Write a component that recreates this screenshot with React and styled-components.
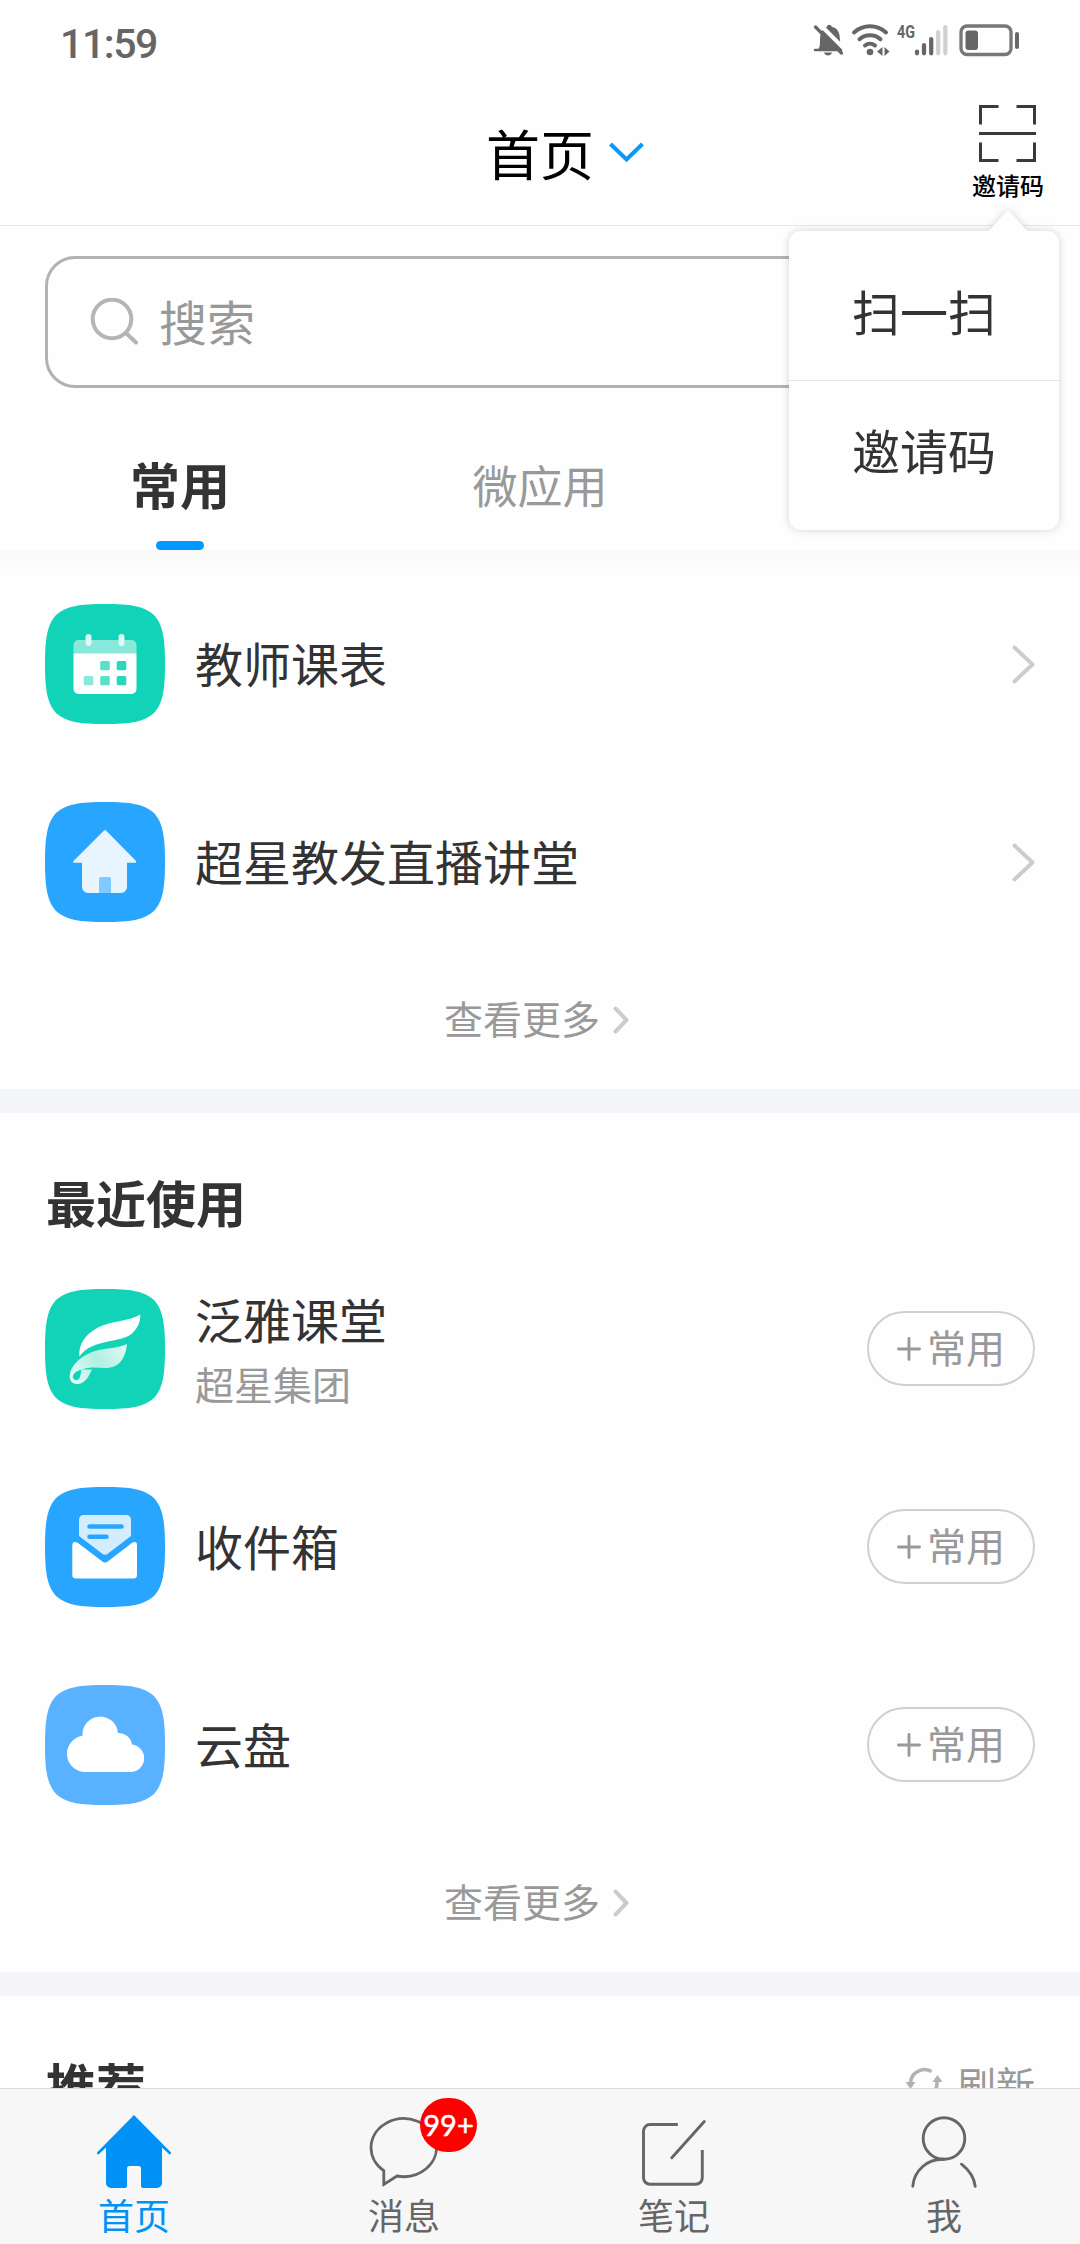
import React from 'react'
import styled, { createGlobalStyle } from 'styled-components'

const GlobalStyle = createGlobalStyle`
  * {
    box-sizing: border-box;
  }

  body {
    margin: 0;
    background: #fefefe;
    font-family: 'Noto Sans CJK SC', sans-serif;
  }

  svg {
    display: block;
    flex: none;
  }
`
const Page = styled.div`
  display: flex;
  flex-direction: column;
  width: 1080px;
  height: 2244px;
  overflow: hidden;
  color: #333;
  background: #fefefe;
`
const StatusBar = styled.div`
  flex: none;
  height: 80px;
  padding: 0 60px;
  display: flex;
  justify-content: space-between;
  align-items: center;
`
const Time = styled.div`
  font-family: Roboto, sans-serif;
  font-size: 41px;
  font-weight: 500;
  line-height: 48px;
  letter-spacing: -1.4px;
  padding-top: 7px;
  color: #666;
`
const Header = styled.header`
  flex: none;
  position: relative;
  z-index: 1;
  height: 146px;
  display: grid;
  grid-template-columns: 1fr auto 1fr;
  align-items: center;
  border-bottom: 1px solid #e8e8e8;
`
const Title = styled.h1`
  grid-column: 2;
  margin: 0;
  font-size: 54px;
  font-weight: 400;
  line-height: 80px;
  color: #000;
`
const HeaderRight = styled.div`
  display: flex;
  justify-content: space-between;
  align-items: center;
  padding: 0 36px 0 15px;
`
const ScanButton = styled.div`
  display: flex;
  flex-direction: column;
  align-items: center;
  gap: 6px;
  padding-top: 1px;
  font-size: 24px;
  font-weight: 500;
  line-height: 34px;
  color: #000;

  svg {
    margin-right: 1px;
  }
`
const Menu = styled.div`
  position: absolute;
  top: 151px;
  left: 789px;
  width: 270px;
  height: 299px;
  padding-top: 10px;
  border-radius: 12px;
  background: #fefefe;
  filter: drop-shadow(0 0 4px rgba(0, 0, 0, 0.17));
`
const MenuArrow = styled.svg`
  position: absolute;
  top: -21px;
  left: 197px;
`
const MenuItem = styled.div`
  height: 140px;
  font-size: 48px;
  line-height: ${props => (props.$last ? 137 : 139)}px;
  text-align: center;
  border-bottom: ${props => (props.$last ? 'none' : '1px solid #e6e6e6')};
`
const Content = styled.main`
  flex: 1;
  min-height: 0;
  overflow: hidden;
`
const SearchBox = styled.div`
  height: 132px;
  margin: 30px 45px 0;
  padding: 0 0 0 42px;
  display: flex;
  align-items: center;
  gap: 21px;
  border: 3px solid #b2b2b2;
  border-radius: 30px;
  font-size: 48px;
  line-height: 72px;
  color: #999;
`
const SearchHint = styled.span`
  margin-top: -4px;
`
const Tabs = styled.nav`
  display: grid;
  grid-template-columns: repeat(3, 1fr);
  height: 162px;
`
const Tab = styled.div`
  display: flex;
  flex-direction: column;
  justify-content: space-between;
  align-items: center;
  padding-top: ${props => (props.$active ? 57 : 59)}px;
  font-size: ${props => (props.$active ? 50 : 45)}px;
  font-weight: ${props => (props.$active ? 700 : 400)};
  line-height: 76px;
  color: ${props => (props.$active ? '#333' : '#999')};

  &:after {
    content: '';
    width: 48px;
    height: 9px;
    border-radius: 5px;
    background: ${props => (props.$active ? '#0099ff' : 'transparent')};
  }
`
const TabShade = styled.div`
  height: 24px;
  margin-bottom: -9px;
  background: linear-gradient(#f9f9fa, #fefefe);
`
const Row = styled.div`
  display: flex;
  align-items: center;
  height: 198px;
  padding: 0 45px;
`
const RowText = styled.div`
  flex: 1;
  margin-left: 30px;
  padding-bottom: 4px;
`
const RowTitle = styled.div`
  font-size: 48px;
  line-height: 72px;
`
const RowNote = styled.div`
  font-size: 39px;
  line-height: 58px;
  color: #999;
`
const AddButton = styled.div`
  display: flex;
  align-items: center;
  justify-content: center;
  gap: 6px;
  width: 168px;
  height: 75px;
  margin-top: -1px;
  border: 2px solid #d0d0d0;
  border-radius: 38px;
  font-size: 39px;
  line-height: 71px;
  color: #999;
`
const AddLabel = styled.span`
  margin-top: -4px;
`
const More = styled.div`
  display: flex;
  justify-content: center;
  align-items: center;
  gap: 13px;
  height: 128px;
  padding: 0 7px 11px 0;
  font-size: 39px;
  line-height: 58px;
  color: #999;
`
const MoreLabel = styled.span`
  margin-top: -5px;
`
const Divider = styled.div`
  height: 24px;
  background: #f4f5f8;
`
const SectionHead = styled.div`
  display: flex;
  justify-content: space-between;
  align-items: center;
  height: 137px;
  padding: 38px 45px 0 46px;
`
const SectionTitle = styled.h2`
  margin: 0;
  font-size: 50px;
  font-weight: 700;
  line-height: 76px;
`
const Refresh = styled.div`
  display: flex;
  align-items: center;
  gap: 15px;
  margin-top: -2px;
  font-size: 39px;
  line-height: 58px;
  color: #999;
`
const BottomBar = styled.footer`
  flex: none;
  display: grid;
  grid-template-columns: repeat(4, 1fr);
  height: 156px;
  border-top: 1px solid #dcdcdc;
  background: #f7f7f7;
`
const NavItem = styled.div`
  position: relative;
  display: flex;
  flex-direction: column;
  align-items: center;
  padding: 26px 2px 0 0;
  font-size: 36px;
  line-height: 52px;
  color: ${props => (props.$active ? '#0092f6' : '#666')};
`
const Badge = styled.span`
  position: absolute;
  top: 9px;
  left: 150px;
  width: 57px;
  height: 54px;
  border-radius: 27px;
  background: #ff0000;
  color: #fff;
  font-family: Lato, sans-serif;
  font-size: 29px;
  line-height: 54px;
  text-align: center;
  -webkit-text-stroke: 0.5px #fff;
`

const StatusIcons = () => (
  <svg width="208" height="36" viewBox="812 22 208 36" fill="none">
    {/* muted bell */}
    <path
      d="M818 50c2-3 2-6 2-10 0-8 3-12 7-13 0-3 4-3 5 0 6 1 8 6 8 14 0 4 1 6 3 9z"
      fill="#666"
    />
    <path d="M824 52.5h8c-1 4-7 4-8 0z" fill="#666" />
    <path d="M815 50h26" stroke="#666" strokeWidth="2.5" strokeLinecap="round" />
    <path d="M818 22.500L847 51.500" stroke="#fefefe" strokeWidth="4" />
    <path d="M815.500 27L841.500 53" stroke="#666" strokeWidth="3.200" strokeLinecap="round" />
    {/* wifi */}
    <g stroke="#666" strokeWidth="4" strokeLinecap="round">
      <path d="M854 32.500C863 24.300 877 24.300 886 32.500" />
      <path d="M859.500 39.300C865.500 34 874.500 34 880.500 39.300" />
      <path d="M865 45.500C868 43 872 43 875 45.500" />
    </g>
    <circle cx="870" cy="52" r="3.300" fill="#666" />
    <path d="M877 51.500l5.500-4.500v9zM889.500 51.500l-5-4.500v9z" fill="#666" />
    <text
      x="897"
      y="38.300"
      fill="#666"
      fontFamily="Roboto, sans-serif"
      fontSize="18.500"
      fontWeight="700"
      textLength="18"
      lengthAdjust="spacingAndGlyphs"
    >
      4G
    </text>
    {/* signal */}
    <g strokeWidth="4.200" strokeLinecap="round">
      <path d="M917 51.500v1.800M924 45v8.300M931.200 39v14.300" stroke="#666" />
      <path d="M938.200 32v21.300M945.300 27v26.300" stroke="#d0d0d0" />
    </g>
    {/* battery */}
    <rect x="961" y="26" width="50" height="28.500" rx="6" stroke="#777" strokeWidth="3.300" />
    <rect x="965.500" y="30.500" width="12.500" height="19.500" rx="3" fill="#666" />
    <path d="M1017 34v13" stroke="#666" strokeWidth="4" strokeLinecap="round" />
  </svg>
)

const ScanIcon = () => (
  <svg width="57" height="57" viewBox="0 0 57 57" fill="none" stroke="#3a3a3a" strokeWidth="3">
    <path d="M1.500 19.500V1.500h18M37.500 1.500h18v18M55.500 37.500v18h-18M19.500 55.500h-18v-18M0 28.500h57" />
  </svg>
)

const SearchIcon = () => (
  <svg width="48" height="48" viewBox="0 0 48 48" fill="none" stroke="#b5b5b5" strokeWidth="4">
    <circle cx="22" cy="21" r="19.300" />
    <path d="M36 35L46 44.500" strokeLinecap="round" />
  </svg>
)

const Arrow = ({ width, height }) => (
  <svg width={width} height={height} fill="none" stroke="#ccc" strokeWidth="4" strokeLinecap="round" strokeLinejoin="round">
    <path d={`M2.500 2.500L${width - 2.5} ${height / 2}L2.500 ${height - 2.5}`} />
  </svg>
)

const AppIcon = ({ color, children }) => (
  <svg width="120" height="120" viewBox="0 0 120 120" fill="none">
    <path
      d="M60 0C85 0 99 2 109 11C118 21 120 35 120 60C120 85 118 99 109 109C99 118 85 120 60 120C35 120 21 118 11 109C2 99 0 85 0 60C0 35 2 21 11 11C21 2 35 0 60 0Z"
      fill={color}
    />
    {children}
  </svg>
)

const CalendarIcon = () => (
  <AppIcon color="#11d3b7">
    <path d="M28.500 50V41a5 5 0 0 1 5-5h53a5 5 0 0 1 5 5v9z" fill="#88e9db" />
    <path d="M28.500 49.500h63V85a5 5 0 0 1-5 5h-53a5 5 0 0 1-5-5z" fill="#fff" />
    <path d="M43.500 33v6M76.500 33v6" stroke="#dff8f4" strokeWidth="6" strokeLinecap="round" />
    <rect x="38.700" y="72" width="9.600" height="9.200" rx="1.500" fill="#88e9db" />
    <rect x="55.200" y="57" width="9.600" height="9.200" rx="1.500" fill="#58e0ca" />
    <rect x="55.200" y="72" width="9.600" height="9.200" rx="1.500" fill="#58e0ca" />
    <rect x="71.700" y="57" width="9.600" height="9.200" rx="1.500" fill="#29d7be" />
    <rect x="71.700" y="72" width="9.600" height="9.200" rx="1.500" fill="#29d7be" />
  </AppIcon>
)

const HouseIcon = () => (
  <AppIcon color="#28a5ff">
    <path
      d="M59 28.500q1-1 2 0L91 59q.8 1.800-1.500 1.800H82V85a6 6 0 0 1-6 6H43a6 6 0 0 1-6-6V60.800h-7.500Q27.500 60.800 28.500 59z"
      fill="#e8f5ff"
    />
    <path d="M54 91V77q0-2 2-2h8q2 0 2 2v14z" fill="#80caff" />
  </AppIcon>
)

const FeatherIcon = () => (
  <AppIcon color="#11d3b7">
    <defs>
      <linearGradient id="leaf" x1="26" y1="88" x2="80" y2="60" gradientUnits="userSpaceOnUse">
        <stop offset="0" stopColor="#e4faf6" />
        <stop offset="0.5" stopColor="#b0efe4" />
        <stop offset="1" stopColor="#dcf8f3" />
      </linearGradient>
    </defs>
    <path d="M95.300 25.500C82 33 67 31.500 53 38.500C40 45.500 33.500 55 34.300 67.500C41 58.500 50 55.500 61 53C73 50.500 83 49 88 43.500C93.500 38 95.500 32 95.300 25.500Z" fill="#fff" />
    <path
      fillRule="evenodd"
      d="M82 55C70 60.500 60 58 47 63C34 68.500 27 76 25 84.500C23.500 91 27 95.500 33 95C41 94 43.500 87.500 47 80.500L37 80.500C50 76 58 81.500 69 77.500C77.500 74 81 65 82 55ZM36.500 80.800C35.500 84 36 88 33.500 90.500C30.500 92.500 27 90 28 86.500C29 83.500 33 81.500 36.500 80.800Z"
      fill="url(#leaf)"
    />
  </AppIcon>
)

const MailIcon = () => (
  <AppIcon color="#28a5ff">
    <path d="M34 49V32.500a4.500 4.500 0 0 1 4.500-4.500h43a4.500 4.500 0 0 1 4.500 4.500V49L63 66.500Q60 69 57 66.500z" fill="#d3edff" />
    <path d="M44.500 39.500h32M44.500 49.800h17" stroke="#28a5ff" strokeWidth="4.600" strokeLinecap="round" />
    <path d="M27.300 58q.5-4.500 5-2.500L57 74.200q3 2.400 6 0L87.500 55.500q4.500-2 4.500 2.500V88a3.500 3.500 0 0 1-3.500 3.500H30.800a3.500 3.500 0 0 1-3.500-3.500z" fill="#fff" />
  </AppIcon>
)

const CloudIcon = () => (
  <AppIcon color="#59b2ff">
    <path
      d="M40.500 87A18.200 18.200 0 0 1 37.500 50.800A17.800 17.800 0 0 1 73 48A13.500 13.500 0 0 1 87 59.500A13.800 13.800 0 0 1 85.500 87Z"
      fill="#fff"
    />
  </AppIcon>
)

const HomeNavIcon = () => (
  <svg width="76" height="73" viewBox="0 0 76 73">
    <path
      d="M38 0L75 37.500Q75.500 39.500 73.500 39.500L66 32.500V68a5 5 0 0 1-5 5H47q-2 0-2-2V53.500q0-2.500-2.500-2.500h-9q-2.500 0-2.500 2.500V71q0 2-2 2H15a5 5 0 0 1-5-5V32.500L2.500 39.500Q.5 39.500 1 37.500Z"
      fill="#0092f6"
    />
  </svg>
)

const MessageNavIcon = () => (
  <svg width="70" height="73" viewBox="0 -2 70 73" fill="none" stroke="#666" strokeWidth="2.800">
    <path d="M14.800 53.600A32.700 29 0 1 1 28 59L14.800 67.500Z" />
  </svg>
)

const NoteNavIcon = () => (
  <svg width="70" height="73" viewBox="0 -2 70 73" fill="none" stroke="#666" strokeWidth="2.900">
    <path d="M38.800 7.500H11a6.500 6.500 0 0 0-6.500 6.500v46.800a6.500 6.500 0 0 0 6.500 6.500H56.800a6.500 6.500 0 0 0 6.500-6.500V33" />
    <path d="M32.800 40.800L65.300 4.500" strokeLinecap="round" />
  </svg>
)

const MeNavIcon = () => (
  <svg width="70" height="73" viewBox="0 0 70 73" fill="none" stroke="#666" strokeWidth="2.900">
    <circle cx="35" cy="23.500" r="20.800" />
    <path d="M3.800 71.200C5 56 18 43.500 35 44.300M52.500 49.200Q64.500 58.500 66.200 71.200" strokeLinecap="round" />
  </svg>
)

const RefreshIcon = () => (
  <svg width="38" height="36" viewBox="0 0 38 36" fill="none" stroke="#b2b2b2" strokeWidth="3.500">
    <path d="M27.500 6.500A14 14 0 0 0 6.500 18.500M11.500 29.500A14 14 0 0 0 33 17" />
    <path d="M1.500 17h10l-5 7zM28.500 17h10l-5-7z" fill="#b2b2b2" stroke="none" />
  </svg>
)

const PlusIcon = () => (
  <svg width="24" height="24" viewBox="0 0 24 24" stroke="#999" strokeWidth="2.900" strokeLinecap="round">
    <path d="M12 1.500v21M1.500 12h21" />
  </svg>
)

const ViewMore = () => (
  <More>
    <MoreLabel>查看更多</MoreLabel>
    <Arrow width={16} height={28} />
  </More>
)

const favourites = [
  { title: '教师课表', Icon: CalendarIcon },
  { title: '超星教发直播讲堂', Icon: HouseIcon },
]

const recents = [
  { title: '泛雅课堂', note: '超星集团', Icon: FeatherIcon },
  { title: '收件箱', Icon: MailIcon },
  { title: '云盘', Icon: CloudIcon },
]

const navItems = [
  { label: '首页', Icon: HomeNavIcon, active: true },
  { label: '消息', Icon: MessageNavIcon, badge: '99+' },
  { label: '笔记', Icon: NoteNavIcon },
  { label: '我', Icon: MeNavIcon },
]

const App = () => (
  <Page>
    <GlobalStyle />
    <StatusBar>
      <Time>11:59</Time>
      <StatusIcons />
    </StatusBar>
    <Header>
      <Title>首页</Title>
      <HeaderRight>
        <svg width="35" height="21" viewBox="0 0 35 21" fill="none" stroke="#0a99f8" strokeWidth="4">
          <path d="M1.500 2L17.500 17.500L33.500 2" />
        </svg>
        <ScanButton>
          <ScanIcon />
          邀请码
        </ScanButton>
      </HeaderRight>
      <Menu>
        <MenuArrow width="44" height="22" viewBox="0 0 44 22">
          <path d="M2 22L19.500 2Q22 -1 24.500 2L42 22Z" fill="#fefefe" />
        </MenuArrow>
        <MenuItem>扫一扫</MenuItem>
        <MenuItem $last>邀请码</MenuItem>
      </Menu>
    </Header>
    <Content>
      <SearchBox>
        <SearchIcon />
        <SearchHint>搜索</SearchHint>
      </SearchBox>
      <Tabs>
        <Tab $active>常用</Tab>
        <Tab>微应用</Tab>
      </Tabs>
      <TabShade />
      {favourites.map(({ title, Icon }) => (
        <Row key={title}>
          <Icon />
          <RowText>
            <RowTitle>{title}</RowTitle>
          </RowText>
          <Arrow width={23} height={39} />
        </Row>
      ))}
      <ViewMore />
      <Divider />
      <SectionHead>
        <SectionTitle>最近使用</SectionTitle>
      </SectionHead>
      {recents.map(({ title, note, Icon }) => (
        <Row key={title}>
          <Icon />
          <RowText>
            <RowTitle>{title}</RowTitle>
            {note && <RowNote>{note}</RowNote>}
          </RowText>
          <AddButton>
            <PlusIcon />
            <AddLabel>常用</AddLabel>
          </AddButton>
        </Row>
      ))}
      <ViewMore />
      <Divider />
      <SectionHead>
        <SectionTitle>推荐</SectionTitle>
        <Refresh>
          <RefreshIcon />
          刷新
        </Refresh>
      </SectionHead>
    </Content>
    <BottomBar>
      {navItems.map(({ label, Icon, active, badge }) => (
        <NavItem key={label} $active={active}>
          <Icon />
          {label}
          {badge && <Badge>{badge}</Badge>}
        </NavItem>
      ))}
    </BottomBar>
  </Page>
)

export default App
